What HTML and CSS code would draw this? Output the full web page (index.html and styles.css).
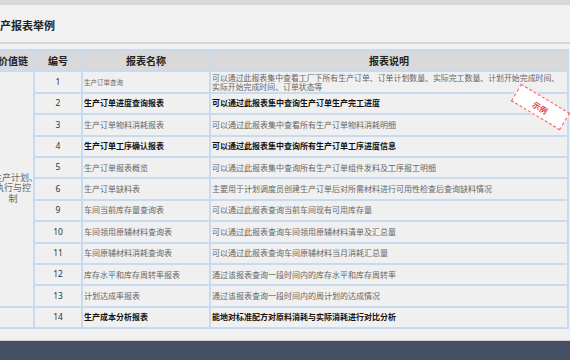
FILE: index.html
```html
<!DOCTYPE html>
<html lang="zh">
<head>
<meta charset="utf-8">
<link rel="stylesheet" href="styles.css">
</head>
<body>
<div class="page">
  <div class="topband"></div>
  <div class="titlebar"><h1 class="title">生产报表举例</h1></div>
  <div class="rule"></div>
  <div class="content">
    <table class="report">
      <colgroup>
        <col class="c1"><col class="c2"><col class="c3"><col class="c4">
      </colgroup>
      <thead>
        <tr><th>价值链</th><th>编号</th><th>报表名称</th><th>报表说明</th></tr>
      </thead>
      <tbody>
        <tr>
          <td class="chain" rowspan="11">生产计划、<br>执行与控<br>制</td>
          <td class="num">1</td>
          <td class="name small">生产订单查询</td>
          <td class="desc two">可以通过此报表集中查看工厂下所有生产订单、订单计划数量、实际完工数量、计划开始完成时间、<br>实际开始完成时间、订单状态等</td>
        </tr>
        <tr class="bold"><td class="num">2</td><td class="name">生产订单进度查询报表</td><td class="desc">可以通过此报表集中查询生产订单生产完工进度</td></tr>
        <tr><td class="num">3</td><td class="name">生产订单物料消耗报表</td><td class="desc">可以通过此报表集中查看所有生产订单物料消耗明细</td></tr>
        <tr class="bold"><td class="num">4</td><td class="name">生产订单工序确认报表</td><td class="desc">可以通过此报表集中查询所有生产订单工序进度信息</td></tr>
        <tr><td class="num">5</td><td class="name">生产订单报表概览</td><td class="desc">可以通过此报表集中查询所有生产订单组件发料及工序报工明细</td></tr>
        <tr><td class="num">6</td><td class="name">生产订单缺料表</td><td class="desc">主要用于计划调度员创建生产订单后对所需材料进行可用性检查后查询缺料情况</td></tr>
        <tr><td class="num">9</td><td class="name">车间当前库存量查询表</td><td class="desc">可以通过此报表查询当前车间现有可用库存量</td></tr>
        <tr><td class="num">10</td><td class="name">车间领用原辅材料查询表</td><td class="desc">可以通过此报表查询车间领用原辅材料清单及汇总量</td></tr>
        <tr><td class="num">11</td><td class="name">车间原辅材料消耗查询表</td><td class="desc">可以通过此报表查询车间原辅材料当月消耗汇总量</td></tr>
        <tr><td class="num">12</td><td class="name">库存水平和库存周转率报表</td><td class="desc">通过该报表查询一段时间内的库存水平和库存周转率</td></tr>
        <tr><td class="num">13</td><td class="name">计划达成率报表</td><td class="desc">通过该报表查询一段时间内的周计划的达成情况</td></tr>
        <tr class="bold"><td class="chain"></td><td class="num">14</td><td class="name">生产成本分析报表</td><td class="desc">能地对标准配方对原料消耗与实际消耗进行对比分析</td></tr>
      </tbody>
    </table>
    <div class="stamp">示例</div>
  </div>
  <div class="foot-gap"></div>
  <div class="foot-rule"></div>
  <div class="footer"></div>
</div>
</body>
</html>
```
FILE: styles.css
```css
html, body {
  margin: 0;
  padding: 0;
  background: #f1f1f1;
  overflow: hidden;
}
.page {
  width: 570px;
  height: 360px;
  display: flex;
  flex-direction: column;
  font-family: "Noto Sans CJK SC", "Noto Sans", sans-serif;
  overflow: hidden;
}
.topband {
  height: 5px;
  background: #d8d8d8;
  flex: none;
}
.titlebar {
  height: 37px;
  flex: none;
  display: flex;
  align-items: center;
  overflow: hidden;
}
.title {
  margin: 0 0 0 -11px;
  font-size: 11px;
  font-weight: 700;
  color: #222;
  line-height: 1;
  padding-top: 4px;
}
.rule {
  height: 2px;
  background: #d4d4d4;
  flex: none;
}
.content {
  position: relative;
  padding-top: 5px;
  flex: none;
}
.report {
  margin-left: -9px;
  border-collapse: collapse;
  table-layout: fixed;
  width: 576px;
}
.c1 { width: 42px; }
.c2 { width: 48px; }
.c3 { width: 128px; }
.c4 { width: 358px; }
.report th, .report td {
  border: 2px solid #c8daf0;
  padding: 0;
  height: 21.4px;
  box-sizing: border-box;
}
.report th {
  background: #d9d9d9;
  font-size: 10px;
  font-weight: 700;
  color: #222;
  text-align: center;
  line-height: 1;
}
.report td {
  background: #f0f0f0;
  font-size: 8px;
  color: #666;
  line-height: 1;
  white-space: nowrap;
  overflow: hidden;
}
.report td.chain {
  text-align: center;
  line-height: 10.5px;
  font-size: 9px;
  color: #666;
  overflow: visible;
  padding-bottom: 1px;
}
.report td.num {
  text-align: center;
  font-family: "Noto Sans", "Liberation Sans", sans-serif;
  font-size: 8.5px;
  color: #333;
}
.report td.name {
  padding-left: 1px;
}
.report td.name.small {
  font-size: 6.5px;
}
.report td.desc {
  padding-left: 1px;
}
.report td.desc.two {
  font-size: 7.9px;
  line-height: 9.5px;
}
.report tr.bold td.name,
.report tr.bold td.desc {
  font-weight: 700;
  color: #111;
}
.stamp {
  position: absolute;
  left: 512px;
  top: 53px;
  width: 55px;
  height: 18px;
  background: #fff;
  border: 1px dashed #e86060;
  color: #e23c3c;
  font-size: 8px;
  font-weight: 700;
  display: flex;
  align-items: center;
  justify-content: center;
  transform: rotate(31deg);
  box-shadow: 0 0 0 1px #fbe3e3;
}
.foot-gap {
  height: 11px;
  flex: none;
}
.foot-rule {
  height: 1px;
  background: #cfcfcf;
  flex: none;
}
.footer {
  flex: 1;
  background: #465064;
}
```
